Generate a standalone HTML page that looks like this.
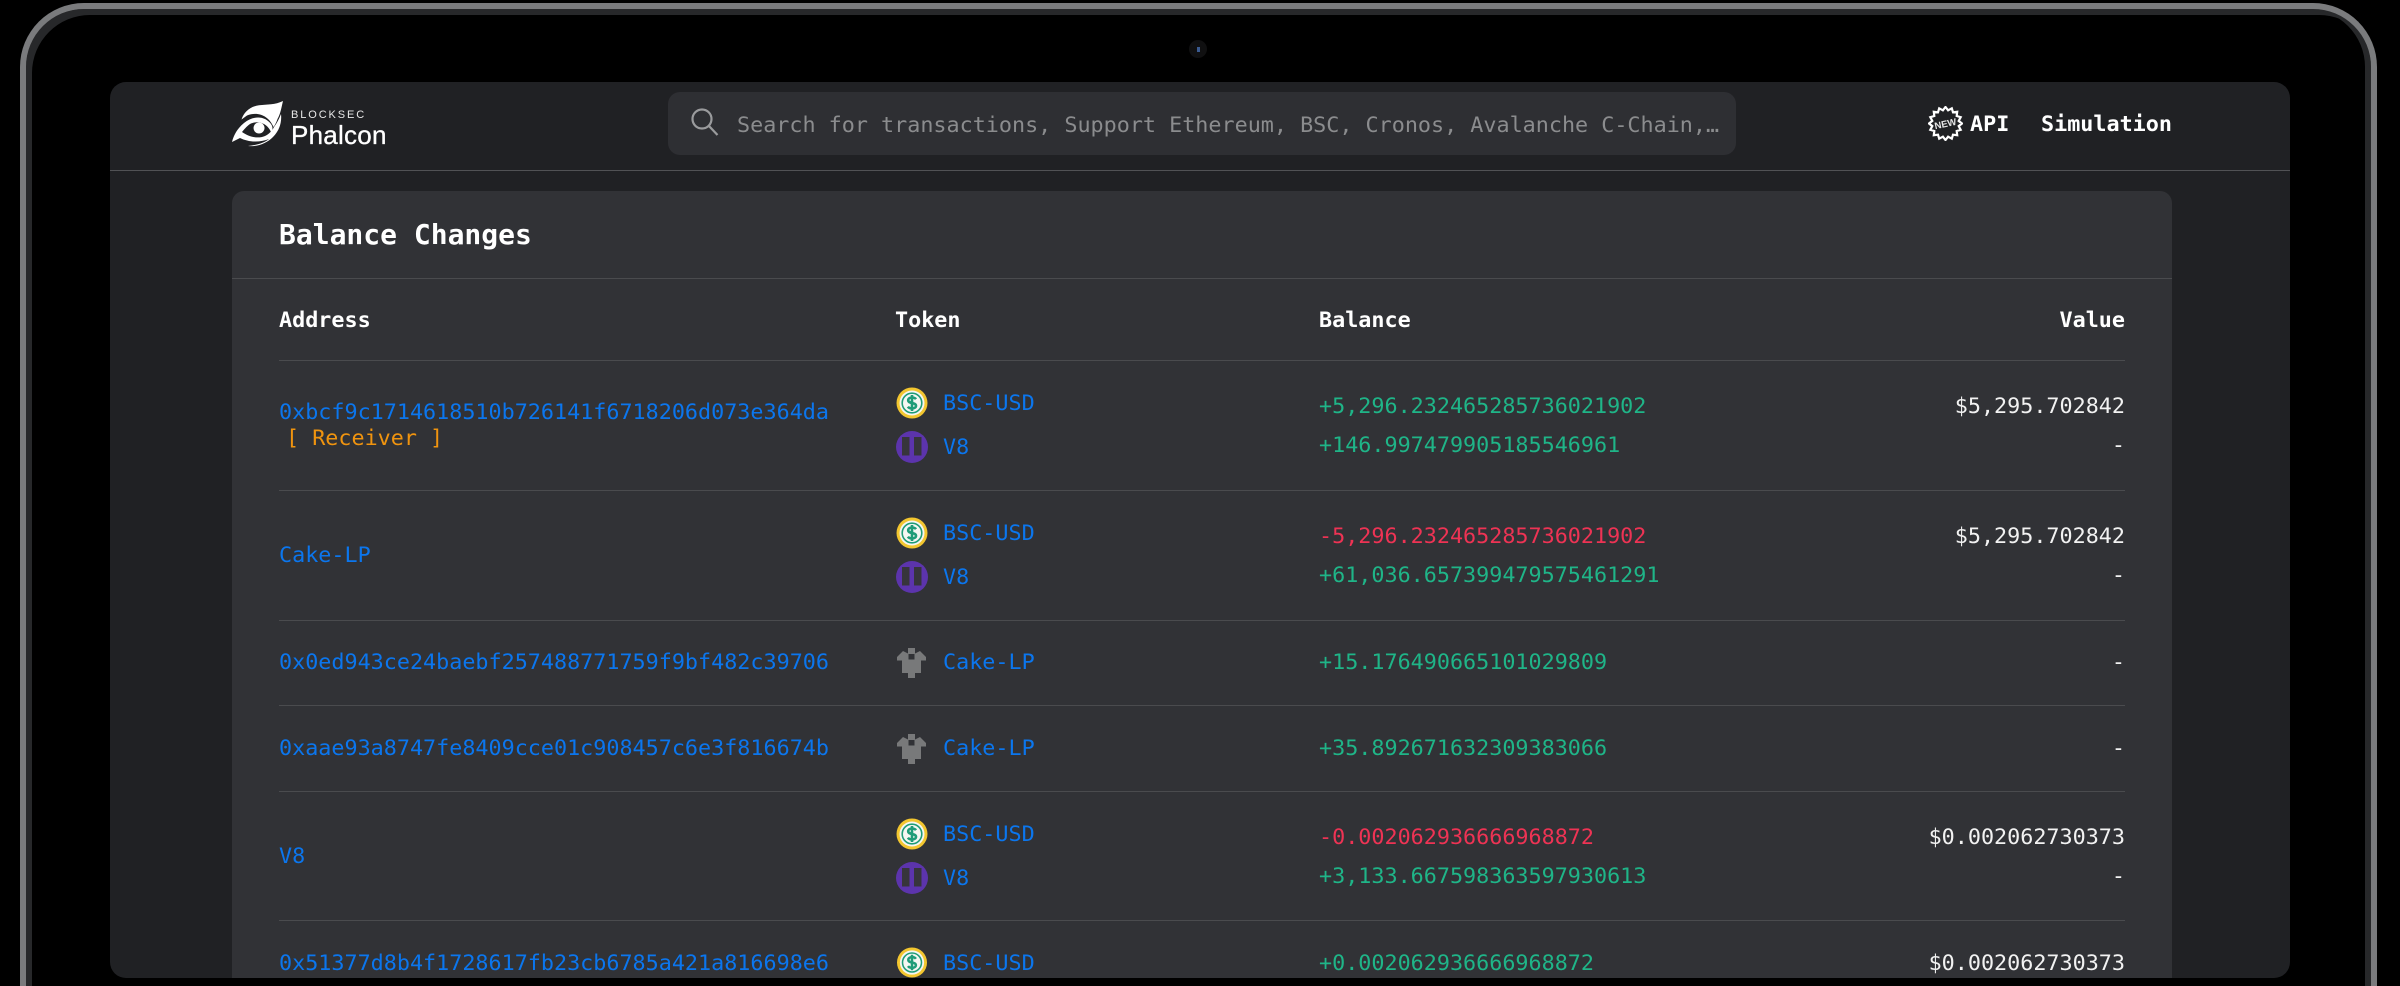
<!DOCTYPE html>
<html><head><meta charset="utf-8"><title>Balance Changes</title>
<style>
html,body{margin:0;padding:0;background:#000;width:2400px;height:986px;overflow:hidden}
*{box-sizing:border-box}
.abs{position:absolute}
#root{position:relative;width:2400px;height:986px;overflow:hidden;background:#000}
#frame{position:absolute;left:20px;top:3px;width:2357px;height:983px;border-radius:64px 64px 0 0;border:6px solid #7a7b7d;border-bottom:0;box-shadow:inset 6px 6px 0 0 #27282a,inset -6px 0 0 0 #27282a}
#panel{position:absolute;left:110px;top:82px;width:2180px;height:896px;background:#202124;border-radius:16px;overflow:hidden;font-family:"DejaVu Sans Mono",monospace}
#page{position:absolute;left:-110px;top:-82px;width:2400px;height:978px}
#hl{position:absolute;left:110px;width:2180px;top:170px;height:1px;background:#515255}
#search{position:absolute;left:668px;top:92px;width:1068px;height:63px;background:#2e2f33;border-radius:12px}
#card{position:absolute;left:232px;top:191px;width:1940px;height:787px;background:#313236;border-radius:12px 12px 0 0}
.d{position:absolute;left:279px;width:1846px;height:1px;background:#4a4b4e}
.t{position:absolute;font-size:21.75px;line-height:30px;height:30px;margin-top:1px;white-space:pre;font-family:"DejaVu Sans Mono",monospace}
.b{color:#0b76ee}.g{color:#1fb588}.r{color:#ee3354}.w{color:#f2f2f2}.o{color:#f0940f}
.h{color:#fff;font-weight:700}
.v{right:275px;color:#f2f2f2;text-align:right}
.ic{position:absolute;width:32px;height:32px}
</style></head><body>
<svg width="0" height="0" style="position:absolute"><defs>
<symbol id="usd" viewBox="0 0 32 32"><circle cx="16" cy="16" r="15.5" fill="#f3c62f"/><circle cx="16" cy="16" r="12.5" fill="#f4f6f2"/><circle cx="16" cy="16" r="9.8" fill="none" stroke="#1f9c78" stroke-width="1.6"/><path d="M20 12.200c-.8-1.200-2.200-1.700-4-1.700-2.300 0-3.800 1.100-3.800 2.800 0 3.800 7.800 1.700 7.800 5.400 0 1.700-1.700 2.800-4 2.800-1.900 0-3.300-.6-4.100-1.800M16 8v16" fill="none" stroke="#1f9c78" stroke-width="2.600"/></symbol>
<symbol id="v8" viewBox="0 0 32 32"><circle cx="16" cy="16" r="16" fill="#5c34ac"/><rect x="6" y="6" width="7.500" height="18.500" fill="#37353b"/><rect x="18" y="6" width="7.500" height="18.500" fill="#37353b"/></symbol>
<symbol id="lp" viewBox="0 0 32 32"><path d="M12 2h7v5.500l5-2.500 6 6v3.500h-5V27h-6v5h-7v-5H6V14.500H1V11l6-6 5 2.500z" fill="#78797a"/><rect x="12.500" y="8" width="6" height="5.500" fill="#313236"/></symbol>
</defs></svg>

<div id="root">
<div id="frame"></div>
<div class="abs" style="left:1189px;top:40px;width:18px;height:18px;border-radius:50%;background:#101011"></div>
<div class="abs" style="left:1197px;top:47px;width:3px;height:5px;background:#3a5a90"></div>

<div id="panel"><div id="page">
<div id="hl"></div>

<!-- logo -->
<svg class="abs" style="left:232px;top:101px" width="52" height="46" viewBox="0 0 52 46">
<path fill="#fff" d="M51 0C49.500 6 48.500 13 45.500 18 44.500 21 43 24 41.500 26 37 15 26 10 15 14.500L9.500 18.500C12 11 18 5.500 27 4.300 35 3.300 43 4 51 0Z"/>
<path fill="#fff" d="M0 41C2 33 6 27 12 22 22 14 33 15 39 23 41 26 41 29 39 31 35 22 26 19 18 23 15 25 12.500 28 10 31 17 36 26 38 33 35 37 33 40 30 42 26 45 22 47 18 49 13 50 22 47 30 41 36 35 42 26 46 16 45 25 44 32 42 37 38 27 42 16 41 8 37Z"/>
<circle cx="27" cy="27" r="5.500" fill="#fff"/></svg>
<div class="abs" style="left:291px;top:110px;font:11px/11px 'Liberation Sans',sans-serif;letter-spacing:1.9px;color:#e8e8e8">BLOCKSEC</div>
<div class="abs" style="left:291px;top:120px;font:26px/30px 'Liberation Sans',sans-serif;letter-spacing:.25px;color:#fff;-webkit-text-stroke:.3px #fff">Phalcon</div>

<!-- search -->
<div id="search"></div>
<svg class="abs" style="left:690px;top:107px" width="30" height="30" viewBox="0 0 30 30" fill="none" stroke="#9a9b9d" stroke-width="2.200"><circle cx="12" cy="12" r="9.500"/><path d="M19 19l8.500 9"/></svg>
<div class="t" style="left:737px;top:110px;color:#8b8c8e">Search for transactions, Support Ethereum, BSC, Cronos, Avalanche C-Chain,…</div>

<!-- nav -->
<svg class="abs" style="left:1928px;top:106px" width="35" height="35" viewBox="0 0 35 35"><polygon transform="translate(17.500 17.500)" points="16.500,0 13.200,2.600 15.200,6.300 11.200,7.500 11.700,11.700 7.500,11.200 6.300,15.200 2.600,13.200 0,16.500 -2.600,13.200 -6.300,15.200 -7.500,11.200 -11.700,11.700 -11.200,7.500 -15.200,6.300 -13.200,2.600 -16.500,0 -13.200,-2.600 -15.200,-6.300 -11.200,-7.500 -11.700,-11.700 -7.500,-11.200 -6.300,-15.200 -2.600,-13.200 0,-16.500 2.600,-13.200 6.300,-15.200 7.500,-11.200 11.700,-11.700 11.200,-7.500 15.200,-6.300 13.200,-2.600" fill="none" stroke="#fff" stroke-width="2.200"/><text x="17.500" y="21" text-anchor="middle" font-family="Liberation Sans" font-weight="700" font-size="9.500" fill="#e8e8e8" transform="rotate(-12 17.500 18)">NEW</text></svg>
<div class="t h" style="left:1970px;top:109px">API</div>
<div class="t h" style="left:2041px;top:109px">Simulation</div>

<!-- card -->
<div id="card"></div>
<div class="abs" style="left:232px;width:1940px;top:278px;height:1px;background:#4a4b4e"></div>
<div class="t h" style="left:279px;top:220px;font-size:28px;line-height:30px;margin-top:0">Balance Changes</div>

<div class="t h" style="left:279px;top:305px">Address</div>
<div class="t h" style="left:895px;top:305px">Token</div>
<div class="t h" style="left:1319px;top:305px">Balance</div>
<div class="t h" style="right:275px;top:305px">Value</div>
<div class="d" style="top:360px"></div>

<!-- row 1 -->
<div class="t b" style="left:279px;top:397px">0xbcf9c1714618510b726141f6718206d073e364da</div>
<div class="t o" style="left:286px;top:423px">[ Receiver ]</div>
<svg class="ic" style="left:896px;top:387px"><use href="#usd"/></svg>
<div class="t b" style="left:943px;top:388px">BSC-USD</div>
<svg class="ic" style="left:896px;top:431px"><use href="#v8"/></svg>
<div class="t b" style="left:943px;top:432px">V8</div>
<div class="t g" style="left:1319px;top:391px">+5,296.232465285736021902</div>
<div class="t v" style="top:391px">$5,295.702842</div>
<div class="t g" style="left:1319px;top:430px">+146.997479905185546961</div>
<div class="t v" style="top:430px">-</div>
<div class="d" style="top:490px"></div>

<!-- row 2 -->
<div class="t b" style="left:279px;top:540px">Cake-LP</div>
<svg class="ic" style="left:896px;top:517px"><use href="#usd"/></svg>
<div class="t b" style="left:943px;top:518px">BSC-USD</div>
<svg class="ic" style="left:896px;top:561px"><use href="#v8"/></svg>
<div class="t b" style="left:943px;top:562px">V8</div>
<div class="t r" style="left:1319px;top:521px">-5,296.232465285736021902</div>
<div class="t v" style="top:521px">$5,295.702842</div>
<div class="t g" style="left:1319px;top:560px">+61,036.657399479575461291</div>
<div class="t v" style="top:560px">-</div>
<div class="d" style="top:620px"></div>

<!-- row 3 -->
<div class="t b" style="left:279px;top:647px">0x0ed943ce24baebf257488771759f9bf482c39706</div>
<svg class="ic" style="left:896px;top:646px"><use href="#lp"/></svg>
<div class="t b" style="left:943px;top:647px">Cake-LP</div>
<div class="t g" style="left:1319px;top:647px">+15.176490665101029809</div>
<div class="t v" style="top:647px">-</div>
<div class="d" style="top:705px"></div>

<!-- row 4 -->
<div class="t b" style="left:279px;top:733px">0xaae93a8747fe8409cce01c908457c6e3f816674b</div>
<svg class="ic" style="left:896px;top:732px"><use href="#lp"/></svg>
<div class="t b" style="left:943px;top:733px">Cake-LP</div>
<div class="t g" style="left:1319px;top:733px">+35.892671632309383066</div>
<div class="t v" style="top:733px">-</div>
<div class="d" style="top:791px"></div>

<!-- row 5 -->
<div class="t b" style="left:279px;top:841px">V8</div>
<svg class="ic" style="left:896px;top:818px"><use href="#usd"/></svg>
<div class="t b" style="left:943px;top:819px">BSC-USD</div>
<svg class="ic" style="left:896px;top:862px"><use href="#v8"/></svg>
<div class="t b" style="left:943px;top:863px">V8</div>
<div class="t r" style="left:1319px;top:822px">-0.002062936666968872</div>
<div class="t v" style="top:822px">$0.002062730373</div>
<div class="t g" style="left:1319px;top:861px">+3,133.667598363597930613</div>
<div class="t v" style="top:861px">-</div>
<div class="d" style="top:920px"></div>

<!-- row 6 -->
<div class="t b" style="left:279px;top:948px;height:29px">0x51377d8b4f1728617fb23cb6785a421a816698e6</div>
<svg class="ic" style="left:896px;top:947px;height:31px"><use href="#usd"/></svg>
<div class="t b" style="left:943px;top:948px;height:29px">BSC-USD</div>
<div class="t g" style="left:1319px;top:948px;height:29px">+0.002062936666968872</div>
<div class="t v" style="top:948px;height:29px">$0.002062730373</div>
</div></div>
</div>
</body></html>
